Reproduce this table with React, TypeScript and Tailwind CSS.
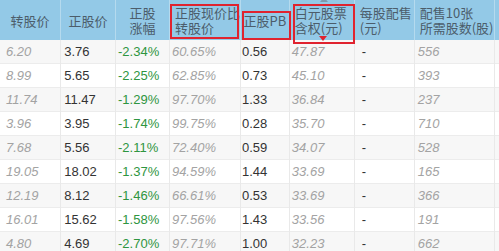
const HEAD: { label: string[]; w: number; align: "center" | "left" }[] = [
  { label: ["转股价"], w: 61, align: "center" },
  { label: ["正股价"], w: 55, align: "center" },
  { label: ["正股", "涨幅"], w: 54, align: "center" },
  { label: ["正股现价比", "转股价"], w: 71, align: "left" },
  { label: ["正股PB"], w: 49, align: "center" },
  { label: ["白元股票", "含权(元)"], w: 65, align: "left" },
  { label: ["每股配售", "(元)"], w: 60, align: "left" },
  { label: ["配售10张", "所需股数(股)"], w: 79, align: "left" },
];

const ROWS: string[][] = [
  ["6.20", "3.76", "-2.34%", "60.65%", "0.56", "47.87", "-", "556"],
  ["8.99", "5.65", "-2.25%", "62.85%", "0.73", "45.10", "-", "393"],
  ["11.74", "11.47", "-1.29%", "97.70%", "1.33", "36.84", "-", "237"],
  ["3.96", "3.95", "-1.74%", "99.75%", "0.28", "35.70", "-", "710"],
  ["7.68", "5.56", "-2.11%", "72.40%", "0.59", "34.07", "-", "528"],
  ["19.05", "18.02", "-1.37%", "94.59%", "1.44", "33.69", "-", "165"],
  ["12.19", "8.12", "-1.46%", "66.61%", "0.53", "33.69", "-", "366"],
  ["16.01", "15.62", "-1.58%", "97.56%", "1.43", "33.56", "-", "191"],
  ["4.80", "4.69", "-2.70%", "97.71%", "1.00", "32.23", "-", "662"],
];

// per column text style: muted italic, plain, green
const CELL = [
  "italic text-[#a3a3a3] pl-[6px]",
  "text-[#333] pl-[3px]",
  "text-[#2e9540] pl-[2px]",
  "italic text-[#a3a3a3] pl-[2px]",
  "text-[#333] pl-[1px]",
  "italic text-[#a3a3a3] pl-[2px]",
  "text-[#333] pl-[7px]",
  "italic text-[#a3a3a3] pl-[3px]",
];

export default function App() {
  return (
    <div className="relative h-[251px] w-[499px] overflow-hidden bg-white font-['Liberation_Sans','Noto_Sans_CJK_SC',sans-serif]">
      <table className="table-fixed border-collapse">
        <colgroup>
          {HEAD.map((h, i) => (
            <col key={i} style={{ width: h.w }} />
          ))}
          <col style={{ width: 5 }} />
        </colgroup>
        <thead>
          <tr className="h-[40px] bg-[#93c9e7]">
            {HEAD.map((h, i) => (
              <th
                key={i}
                className={`border-r border-[#b5daee] p-0 align-middle text-[13px] font-normal leading-[15px] text-[#4c5d6b] font-['Noto_Sans_CJK_SC',sans-serif] ${
                  h.align === "center" ? "text-center" : "pl-[5px] text-left"
                }`}
              >
                {h.label.map((l) => (
                  <div key={l} className="whitespace-nowrap">
                    {l}
                  </div>
                ))}
              </th>
            ))}
            <th className="p-0" />
          </tr>
        </thead>
        <tbody>
          {ROWS.map((r, ri) => (
            <tr
              key={ri}
              className={`h-[23px] border-b border-[#ececec] ${ri % 2 === 0 ? "bg-[#f7f7f7]" : "bg-white"}`}
            >
              {r.map((v, ci) => (
                <td
                  key={ci}
                  className={`border-r border-[#e9e9e9] p-0 align-middle text-[13px] leading-[23px] whitespace-nowrap ${CELL[ci]}`}
                >
                  {v}
                </td>
              ))}
              <td className="p-0" />
            </tr>
          ))}
        </tbody>
      </table>

      {/* red highlight boxes drawn over the header */}
      <div className="pointer-events-none absolute left-[170px] top-[4px] h-[35px] w-[69px] border-2 border-[#e0232f]" />
      <div className="pointer-events-none absolute left-[242px] top-[11px] h-[29px] w-[49px] border-2 border-[#e0232f]" />
      <div className="pointer-events-none absolute left-[293px] top-[4px] h-[40px] w-[62px] border-2 border-[#e0232f]" />

      {/* sort markers */}
      <div className="absolute left-[320px] top-[-3px] h-0 w-0 border-x-[4px] border-b-[5px] border-x-transparent border-b-[#7d9aad]" />
      <div className="absolute left-[319px] top-[36px] h-0 w-0 border-x-[4px] border-t-[5px] border-x-transparent border-t-[#e0232f]" />
    </div>
  );
}
